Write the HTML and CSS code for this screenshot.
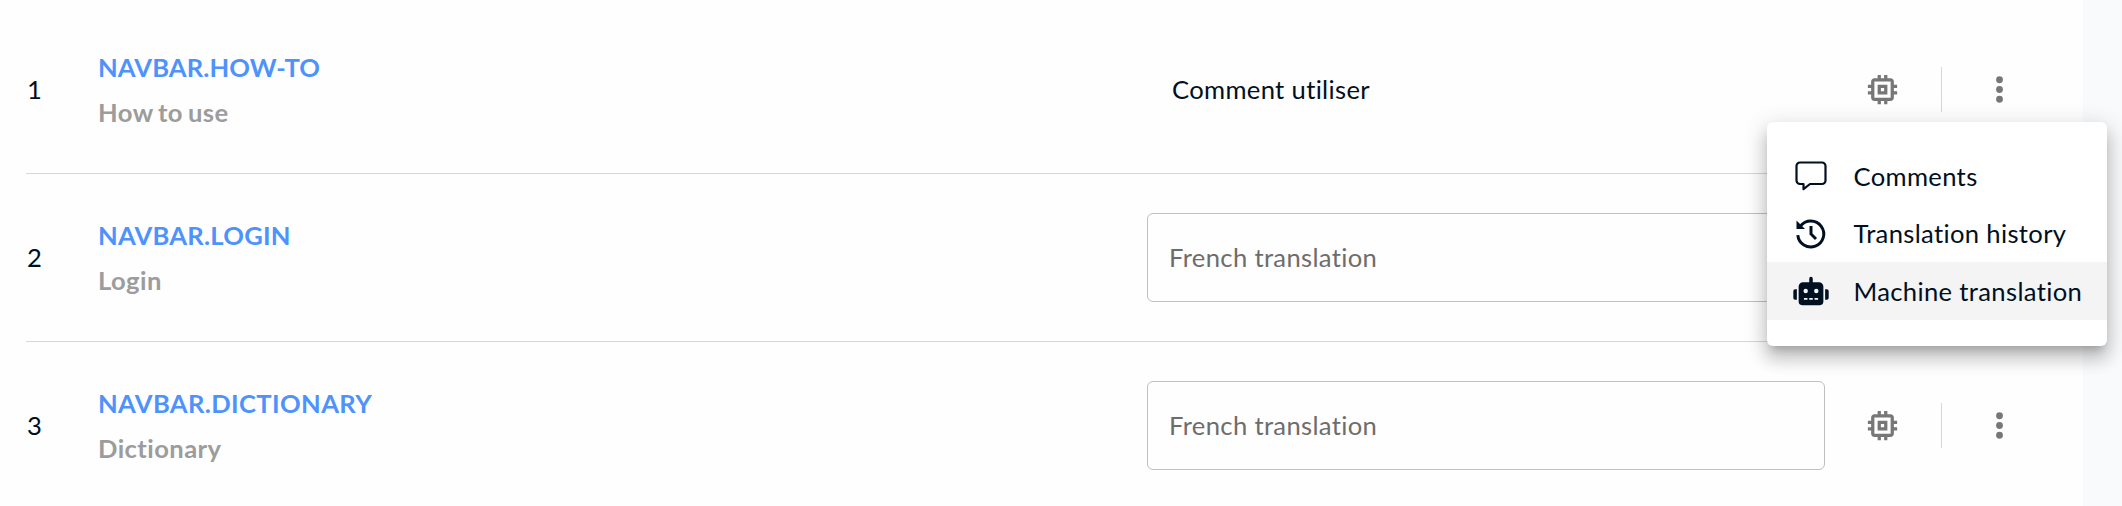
FILE: index.html
```html
<!DOCTYPE html>
<html lang="en">
<head>
<meta charset="utf-8">
<title>Translations</title>
<link rel="stylesheet" href="styles.css">
</head>
<body>
<svg class="defs" width="0" height="0">
  <symbol id="chip" viewBox="0 0 24 24"><path d="M15 9H9v6h6V9zm-2 4h-2v-2h2v2zm8-2V9h-2V7c0-1.1-.9-2-2-2h-2V3h-2v2h-2V3H9v2H7c-1.1 0-2 .9-2 2v2H3v2h2v2H3v2h2v2c0 1.1.9 2 2 2h2v2h2v-2h2v2h2v-2h2c1.1 0 2-.9 2-2v-2h2v-2h-2v-2h2zm-4 6H7V7h10v10z"/></symbol>
  <symbol id="more" viewBox="0 0 24 24"><circle cx="12" cy="6" r="2.1"/><circle cx="12" cy="12" r="2.1"/><circle cx="12" cy="18" r="2.1"/></symbol>
</svg>
<main class="panel">
  <section class="row">
    <span class="num">1</span>
    <div class="term"><a class="key key-tight">NAVBAR.HOW-TO</a><span class="source">How to use</span></div>
    <div class="value">Comment utiliser</div>
    <div class="actions"><svg class="icon"><use href="#chip"/></svg><i class="divider"></i><svg class="icon"><use href="#more"/></svg></div>
  </section>
  <section class="row">
    <span class="num">2</span>
    <div class="term"><a class="key">NAVBAR.LOGIN</a><span class="source">Login</span></div>
    <div class="field">French translation</div>
    <div class="actions"><svg class="icon"><use href="#chip"/></svg><i class="divider"></i><svg class="icon"><use href="#more"/></svg></div>
  </section>
  <section class="row">
    <span class="num">3</span>
    <div class="term"><a class="key key-wide">NAVBAR.DICTIONARY</a><span class="source">Dictionary</span></div>
    <div class="field">French translation</div>
    <div class="actions"><svg class="icon"><use href="#chip"/></svg><i class="divider"></i><svg class="icon"><use href="#more"/></svg></div>
  </section>
</main>
<nav class="menu">
  <a class="item"><svg class="menu-icon" viewBox="0 0 36 36"><path class="line" d="M7 4.500h22a3.500 3.500 0 0 1 3.500 3.500v14.500a3.500 3.500 0 0 1-3.500 3.500H17l-6.500 5.200v-5.200H7a3.500 3.500 0 0 1-3.500-3.500V8a3.500 3.500 0 0 1 3.500-3.500z"/></svg><span>Comments</span></a>
  <a class="item"><svg class="menu-icon" viewBox="0 0 36 36"><path class="line thick" d="M7.500 10a13 13 0 1 1-2.700 9.200M18 10v8l5 5"/><path d="M3.500 4.500V13H12z"/></svg><span>Translation history</span></a>
  <a class="item active"><svg class="menu-icon" viewBox="-6 0 652 512"><path fill-rule="evenodd" d="M32 224h32v192H32a32 32 0 0 1-32-32V256a32 32 0 0 1 32-32zm512-48v272a64 64 0 0 1-64 64H160a64 64 0 0 1-64-64V176a80 80 0 0 1 80-80h112V32a32 32 0 0 1 64 0v64h112a80 80 0 0 1 80 80zM264 256a40 40 0 1 0-80 0 40 40 0 0 0 80 0zm-8 128h-64v32h64zm96 0h-64v32h64zM456 256a40 40 0 1 0-80 0 40 40 0 0 0 80 0zm-8 128h-64v32h64zm192-128v128a32 32 0 0 1-32 32h-32V224h32a32 32 0 0 1 32 32z"/></svg><span>Machine translation</span></a>
</nav>
</body>
</html>
```
FILE: styles.css
```css
* { box-sizing: border-box; }
body {
  margin: 0;
  height: 506px;
  overflow: hidden;
  position: relative;
  background: #f8fafc;
  color: #001022;
  font-family: Lato, sans-serif;
  font-size: 25.6px;
  line-height: 32px;
  letter-spacing: .34px;
  font-variant-ligatures: none;
}
.defs { position: absolute; }
.panel {
  width: 2083px;
  height: 506px;
  padding: 6px 58px 0 26px;
  background: #fefefe;
  overflow: hidden;
}
.row {
  height: 168px;
  display: grid;
  grid-template-columns: 72px 1049px 678px 200px;
  align-items: center;
  border-bottom: 1px solid #c8dae4;
}
.row:last-child { border-bottom: 0; padding-bottom: 1px; }
.num { padding: 0 0 2px 1px; }
.term { display: flex; flex-direction: column; gap: 13px; font-weight: 700; }
.key { color: #4e92fb; letter-spacing: .24px; }
.key-tight { letter-spacing: .12px; }
.key-wide { letter-spacing: .37px; }
.source { color: #9c9c9c; letter-spacing: .42px; word-spacing: -1.7px; }
.value { padding: 0 0 2px 25px; }
.field {
  height: 89px;
  display: flex;
  align-items: center;
  padding: 0 0 2px 21px;
  border: 1px solid #c0c0c0;
  border-radius: 6px;
  color: #6d6d6d;
}
.actions { display: flex; align-items: center; padding-left: 38px; }
.icon { width: 39px; height: 39px; fill: #777; }
.divider { width: 1px; height: 45px; margin: 0 38px 0 39px; background: #c8dae4; }
.menu {
  position: absolute;
  left: 1767px;
  top: 122px;
  width: 340px;
  height: 224px;
  padding: 25.6px 0;
  border-radius: 6px;
  background: #fff;
  box-shadow: 0 8px 8px -5px rgba(0,0,0,.2), 0 13px 16px 2px rgba(0,0,0,.14), 0 5px 22px 4px rgba(0,0,0,.12);
}
.item { height: 57.4px; display: flex; align-items: center; gap: 24.5px; padding-left: 26px; }
.item span { padding-bottom: 0.4px; }
.active { background: #f4f4f4; }
.menu-icon { width: 36px; height: 36px; fill: #001022; }
.line { fill: none; stroke: #001022; stroke-width: 2.2; stroke-linejoin: round; }
.thick { stroke-width: 3; stroke-linejoin: miter; }
```
